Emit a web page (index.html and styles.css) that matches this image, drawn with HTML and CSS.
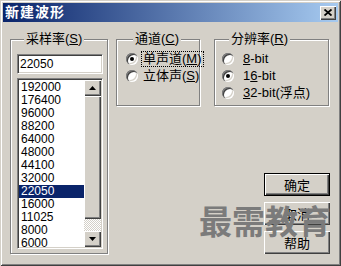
FILE: index.html
```html
<!DOCTYPE html>
<html>
<head>
    <title>新建波形</title>
    <link rel="stylesheet" href="styles.css">
</head>
<body>
    <div class="window">
        <div class="titlebar">
            <span class="title">新建波形</span>
            <span class="close-btn">
                <svg width="8" height="7" viewBox="0 0 8 7"><path d="M0.5 0.5L7.5 6.5M7.5 0.5L0.5 6.5" stroke="#000" stroke-width="1.8"/></svg>
            </span>
        </div>

        <div class="content">
            <fieldset class="group group-rate">
                <legend>采样率(<u>S</u>)</legend>
                <div class="field">22050</div>
                <div class="listbox">
                    <ul class="items">
                        <li>192000</li>
                        <li>176400</li>
                        <li>96000</li>
                        <li>88200</li>
                        <li>64000</li>
                        <li>48000</li>
                        <li>44100</li>
                        <li>32000</li>
                        <li class="selected">22050</li>
                        <li>16000</li>
                        <li>11025</li>
                        <li>8000</li>
                        <li>6000</li>
                    </ul>
                    <div class="scrollbar">
                        <span class="sb-btn"><svg width="7" height="4" viewBox="0 0 7 4"><path d="M0 4h7L3.5 0z" fill="#000"/></svg></span>
                        <span class="sb-thumb"></span>
                        <span class="sb-track"></span>
                        <span class="sb-btn"><svg width="7" height="4" viewBox="0 0 7 4"><path d="M0 0h7L3.5 4z" fill="#000"/></svg></span>
                    </div>
                </div>
            </fieldset>

            <div class="side">
                <div class="groups">
                    <fieldset class="group group-channel">
                        <legend>通道(<u>C</u>)</legend>
                        <div class="radio-row">
                            <span class="radio checked"></span>
                            <span class="label focused">单声道(<u>M</u>)</span>
                        </div>
                        <div class="radio-row">
                            <span class="radio"></span>
                            <span class="label">立体声(<u>S</u>)</span>
                        </div>
                    </fieldset>

                    <fieldset class="group group-res">
                        <legend>分辨率(<u>R</u>)</legend>
                        <div class="radio-row">
                            <span class="radio"></span>
                            <span class="label"><u>8</u>-bit</span>
                        </div>
                        <div class="radio-row">
                            <span class="radio checked"></span>
                            <span class="label">1<u>6</u>-bit</span>
                        </div>
                        <div class="radio-row">
                            <span class="radio"></span>
                            <span class="label"><u>3</u>2-bit(浮点)</span>
                        </div>
                    </fieldset>
                </div>

                <div class="buttons">
                    <button class="btn default">确定</button>
                    <button class="btn">取消</button>
                    <button class="btn">帮助</button>
                </div>
            </div>
        </div>

        <div class="watermark">最需教育</div>
    </div>
</body>
</html>
```

FILE: styles.css
```css
body {
    margin: 0;
    padding: 0;
    font-family: "Liberation Sans", "Noto Sans CJK SC", sans-serif;
    font-size: 13px;
    color: #000;
}
.window {
    position: relative;
    width: 341px;
    height: 266px;
    box-sizing: border-box;
    padding: 3px;
    background-color: #d4d0c8;
    box-shadow: inset 1px 1px 0 #d4d0c8, inset -1px -1px 0 #404040,
                inset 2px 2px 0 #fff, inset -2px -2px 0 #808080;
    overflow: hidden;
}
.titlebar {
    height: 19px;
    display: flex;
    align-items: center;
    justify-content: space-between;
    padding: 0 2px 0 2px;
    background: linear-gradient(to right, #0a246a, #a6caf0);
}
.title {
    color: #fff;
    font-weight: bold;
    font-size: 14px;
    line-height: 19px;
    letter-spacing: 1px;
}
.close-btn {
    width: 16px;
    height: 14px;
    display: flex;
    align-items: center;
    justify-content: center;
    background-color: #d4d0c8;
    box-shadow: inset 1px 1px 0 #fff, inset -1px -1px 0 #404040,
                inset -2px -2px 0 #808080;
}
.content {
    display: flex;
    gap: 8px;
    padding: 10px 0 0 7px;
}

/* etched group boxes */
.group {
    margin: 0;
    border: 1px solid #808080;
    box-shadow: 1px 1px 0 #fff, inset 1px 1px 0 #fff;
    box-sizing: border-box;
    min-width: 0;
}
.group legend {
    margin-left: 7px;
    padding: 0 2px;
    line-height: 14px;
    background-color: #d4d0c8;
}
.group-rate {
    width: 98px;
    height: 222px;
    padding: 8px 4px 0 6px;
}
.group-channel {
    width: 84px;
    height: 74px;
    padding: 4px 0 0 9px;
}
.group-res {
    width: 115px;
    height: 74px;
    padding: 4px 0 0 7px;
}

.field {
    height: 20px;
    box-sizing: border-box;
    padding-left: 2px;
    line-height: 18px;
    font-size: 12px;
    background-color: #fff;
    border: 1px solid;
    border-color: #808080 #fff #fff #808080;
    box-shadow: inset 1px 1px 0 #404040, inset -1px -1px 0 #d4d0c8;
}
.listbox {
    margin-top: 4px;
    height: 171px;
    display: flex;
    box-sizing: border-box;
    padding: 1px;
    background-color: #fff;
    border: 1px solid;
    border-color: #808080 #fff #fff #808080;
    box-shadow: inset 1px 1px 0 #404040, inset -1px -1px 0 #d4d0c8;
}
.items {
    flex: 1;
    margin: 0;
    padding: 1px 0 0 0;
    list-style: none;
    overflow: hidden;
    font-size: 12px;
}
.items li {
    height: 13px;
    line-height: 13px;
    padding-left: 2px;
}
.items li.selected {
    background-color: #0a246a;
    color: #fff;
}
.scrollbar {
    width: 17px;
    display: flex;
    flex-direction: column;
}
.sb-btn, .sb-thumb {
    background-color: #d4d0c8;
    box-shadow: inset 1px 1px 0 #fff, inset -1px -1px 0 #404040,
                inset -2px -2px 0 #808080;
}
.sb-btn {
    height: 16px;
    display: flex;
    align-items: center;
    justify-content: center;
}
.sb-thumb {
    height: 123px;
}
.sb-track {
    flex: 1;
    background-color: #fff;
    background-image: repeating-conic-gradient(#d4d0c8 0 25%, #fff 0 50%);
    background-size: 2px 2px;
}

.side {
    width: 214px;
    display: flex;
    flex-direction: column;
}
.groups {
    display: flex;
    gap: 14px;
}
.radio-row {
    height: 17px;
    display: flex;
    align-items: center;
}
.group-channel .radio-row {
    gap: 3px;
}
.group-res .radio-row {
    gap: 7px;
}
.radio {
    position: relative;
    width: 12px;
    height: 12px;
    flex: none;
    border-radius: 50%;
    background-color: #fff;
    box-shadow: inset 1px 1px 0 #808080, inset 2px 2px 0 #404040,
                inset -1px -1px 0 #fff, inset -2px -2px 0 #d4d0c8;
}
.radio.checked::after {
    content: "";
    position: absolute;
    left: 4px;
    top: 4px;
    width: 4px;
    height: 4px;
    border-radius: 50%;
    background-color: #000;
}
.label {
    line-height: 14px;
    padding: 0 1px;
    border: 1px solid transparent;
    white-space: nowrap;
}
.label.focused {
    border: 1px dotted #000;
}

.buttons {
    align-self: flex-end;
    margin-top: 67px;
    display: flex;
    flex-direction: column;
    gap: 6px;
}
.btn {
    width: 66px;
    height: 23px;
    padding: 0;
    font-family: inherit;
    font-size: 13px;
    color: #000;
    background-color: #d4d0c8;
    border: none;
    box-shadow: inset 1px 1px 0 #fff, inset -1px -1px 0 #404040,
                inset -2px -2px 0 #808080;
}
.btn.default {
    border: 1px solid #000;
}

.watermark {
    position: absolute;
    left: 199px;
    top: 206px;
    font-size: 33px;
    line-height: 33px;
    font-weight: bold;
    color: #7b7b7b;
    white-space: nowrap;
}
```
